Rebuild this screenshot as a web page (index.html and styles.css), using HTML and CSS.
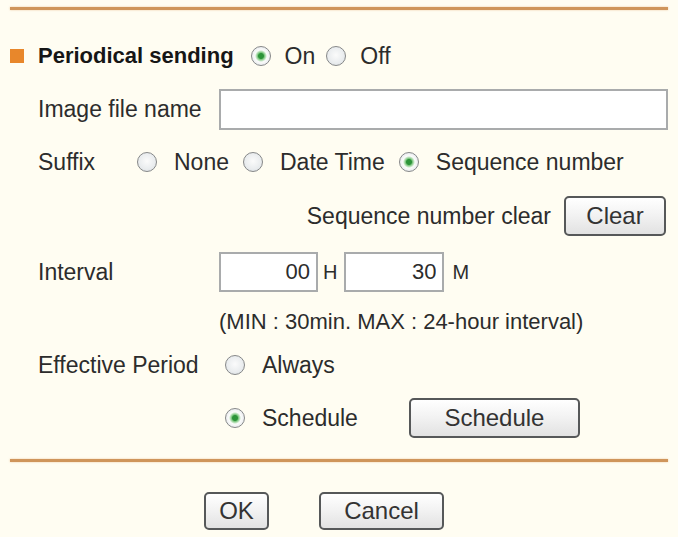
FILE: index.html
```html
<!DOCTYPE html>
<html lang="en">
<head>
<meta charset="utf-8">
<title>Periodical sending</title>
<link rel="stylesheet" href="styles.css">
</head>
<body>
<div class="panel">
  <div class="rule"></div>

  <div class="row row-head">
    <span class="marker"></span>
    <span class="title">Periodical sending</span>
    <label class="opt opt-first"><input class="radio" type="radio" name="ps" checked><span class="opt-text opt-text-head">On</span></label>
    <label class="opt opt-off"><input class="radio" type="radio" name="ps"><span class="opt-text opt-text-head">Off</span></label>
  </div>

  <div class="row row-file">
    <span class="label">Image file name</span>
    <input class="field field-wide" type="text">
  </div>

  <div class="row row-suffix">
    <span class="label label-suffix">Suffix</span>
    <label class="opt opt-flush"><input class="radio" type="radio" name="sfx"><span class="opt-text">None</span></label>
    <label class="opt"><input class="radio" type="radio" name="sfx"><span class="opt-text">Date Time</span></label>
    <label class="opt"><input class="radio" type="radio" name="sfx" checked><span class="opt-text">Sequence number</span></label>
  </div>

  <div class="row row-clear">
    <span class="clear-text">Sequence number clear</span>
    <button class="btn btn-clear" type="button">Clear</button>
  </div>

  <div class="row row-interval">
    <span class="label">Interval</span>
    <input class="field field-hour" type="text" value="00">
    <span class="unit unit-h">H</span>
    <input class="field field-min" type="text" value="30">
    <span class="unit unit-m">M</span>
  </div>

  <div class="row row-hint">
    <span class="hint">(MIN : 30min. MAX : 24-hour interval)</span>
  </div>

  <div class="row row-always">
    <span class="label label-period">Effective Period</span>
    <label class="opt opt-flush"><input class="radio" type="radio" name="ep"><span class="opt-text">Always</span></label>
  </div>

  <div class="row row-schedule">
    <label class="opt opt-flush"><input class="radio" type="radio" name="ep" checked><span class="opt-text">Schedule</span></label>
    <button class="btn btn-schedule" type="button">Schedule</button>
  </div>

  <div class="rule rule-bottom"></div>

  <div class="row row-actions">
    <button class="btn btn-ok" type="button">OK</button>
    <button class="btn btn-cancel" type="button">Cancel</button>
  </div>
</div>
</body>
</html>
```

FILE: styles.css
```css
* {
  box-sizing: border-box;
}

html, body {
  margin: 0;
  padding: 0;
}

body {
  width: 678px;
  height: 537px;
  overflow: hidden;
  background: #fffdf2;
  font-family: "Liberation Sans", Arial, sans-serif;
  font-size: 23px;
  color: #2c2c2c;
}

.panel {
  padding: 7px 10px 0 10px;
}

.rule {
  height: 3px;
  background: #cf955b;
  box-shadow: 0 0 2px rgba(228, 170, 110, 0.7);
}

.row {
  display: flex;
  align-items: center;
  height: 40px;
}

/* header row */
.row-head {
  margin-top: 26px;
}

.marker {
  flex: none;
  width: 14px;
  height: 14px;
  background: #e8872b;
  margin-right: 14px;
}

.title {
  font-weight: bold;
  font-size: 22px;
  color: #161616;
}

/* radio options */
.opt {
  display: flex;
  align-items: center;
  margin-left: 14px;
}

.opt-first {
  margin-left: 17px;
}

.opt-off {
  margin-left: 11px;
}

.opt-flush {
  margin-left: 0;
}

.opt-text {
  margin-left: 17px;
}

.opt-text-head {
  margin-left: 14px;
}

.radio {
  -webkit-appearance: none;
  appearance: none;
  flex: none;
  margin: 0;
  width: 20px;
  height: 20px;
  border-radius: 50%;
  border: 1.5px solid #868889;
  background: radial-gradient(circle at 50% 45%, #fbfbfb 0, #e9ecee 60%, #d3d8dc 100%);
}

.radio:checked {
  background: radial-gradient(circle, #2c9439 0, #2c9439 2.5px, #7cc57f 3.5px, #c9e8c9 5px, #fbfbfb 6px, #e9ecee 75%, #d3d8dc 100%);
}

/* labels */
.label {
  flex: none;
  width: 209px;
  padding-left: 28px;
}

.label-suffix {
  width: 127px;
}

.label-period {
  width: 215px;
}

/* inputs */
.field {
  height: 41px;
  border: 2px solid #a9abac;
  background: #fff;
  font-family: "Liberation Sans", Arial, sans-serif;
  font-size: 22px;
  color: #2c2c2c;
  padding: 0 6px;
  margin: 0;
  text-align: right;
}

.row-file {
  margin-top: 13px;
  height: 41px;
}

.field-wide {
  flex: 1;
  text-align: left;
}

.row-suffix {
  margin-top: 12px;
}

.row-clear {
  margin-top: 14px;
  justify-content: flex-end;
  padding-right: 2px;
}

.clear-text {
  margin-right: 13px;
}

.row-interval {
  margin-top: 16px;
}

.field-hour {
  width: 99px;
  height: 40px;
}

.field-min {
  width: 100px;
  height: 40px;
}

.unit {
  font-size: 20px;
}

.unit-h {
  margin: 0 7px 0 5px;
}

.unit-m {
  margin-left: 8px;
}

.row-hint {
  margin-top: 15px;
  height: 30px;
  padding-left: 209px;
}

.hint {
  font-size: 22px;
}

.row-always {
  margin-top: 8px;
}

.row-schedule {
  margin-top: 13px;
  padding-left: 215px;
}

.rule-bottom {
  margin-top: 21px;
}

/* buttons */
.btn {
  height: 40px;
  margin: 0;
  padding: 0;
  border: 2px solid #565859;
  border-radius: 5px;
  background: linear-gradient(#ffffff, #f3f3f3 45%, #e2e2e2);
  font-family: "Liberation Sans", Arial, sans-serif;
  font-size: 24px;
  color: #333;
}

.btn-clear {
  width: 102px;
}

.btn-schedule {
  width: 171px;
  margin-left: 51px;
}

.row-actions {
  margin-top: 30px;
  height: 38px;
  justify-content: center;
  gap: 50px;
  padding-right: 30px;
}

.btn-ok {
  width: 65px;
  height: 38px;
}

.btn-cancel {
  width: 125px;
  height: 38px;
}
```
